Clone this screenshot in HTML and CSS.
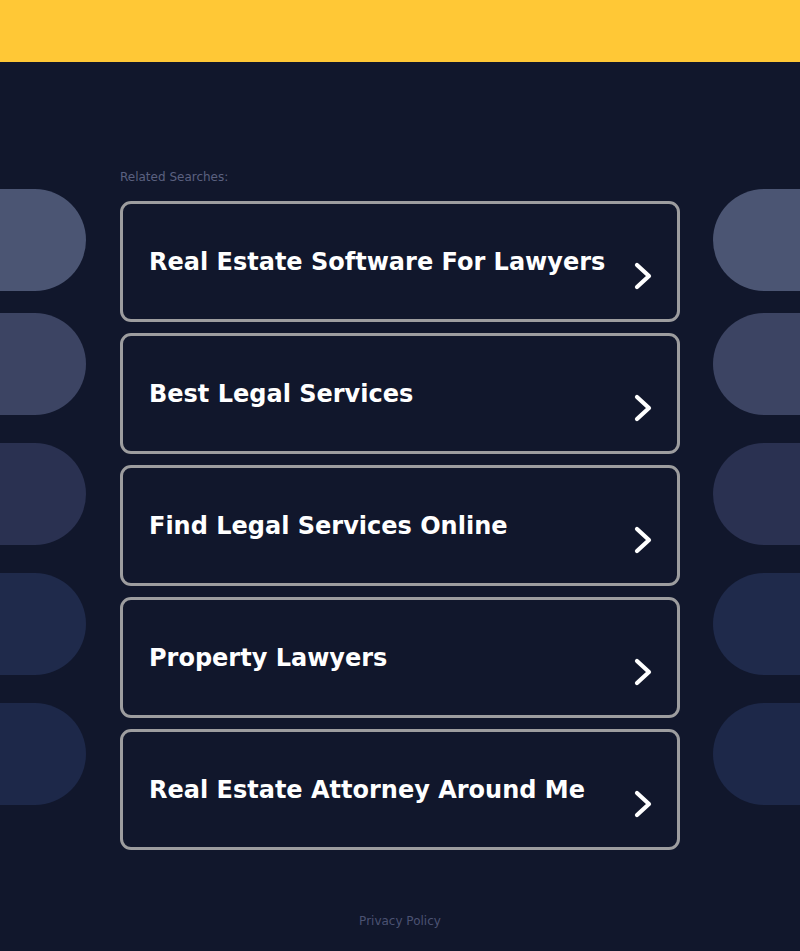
FILE: index.html
```html
<!DOCTYPE html>
<html lang="en">
<head>
<meta charset="utf-8">
<title>Related Searches</title>
<link rel="stylesheet" href="styles.css">
</head>
<body>
<header class="topbar"></header>
<div class="layout">
  <aside class="side side-left">
    <div class="pill p1"></div>
    <div class="pill p2"></div>
    <div class="pill p3"></div>
    <div class="pill p4"></div>
    <div class="pill p5"></div>
  </aside>
  <main class="main">
    <p class="label">Related Searches:</p>
    <ul class="links">
      <li><a class="card" href="#"><span class="card-text">Real Estate Software For Lawyers</span><svg class="chev" viewBox="0 0 20 28" width="20" height="28"><polyline points="4,3 16,14 4,25" fill="none" stroke="#fff" stroke-width="4.2" stroke-linecap="round" stroke-linejoin="round"/></svg></a></li>
      <li><a class="card" href="#"><span class="card-text">Best Legal Services</span><svg class="chev" viewBox="0 0 20 28" width="20" height="28"><polyline points="4,3 16,14 4,25" fill="none" stroke="#fff" stroke-width="4.2" stroke-linecap="round" stroke-linejoin="round"/></svg></a></li>
      <li><a class="card" href="#"><span class="card-text">Find Legal Services Online</span><svg class="chev" viewBox="0 0 20 28" width="20" height="28"><polyline points="4,3 16,14 4,25" fill="none" stroke="#fff" stroke-width="4.2" stroke-linecap="round" stroke-linejoin="round"/></svg></a></li>
      <li><a class="card" href="#"><span class="card-text">Property Lawyers</span><svg class="chev" viewBox="0 0 20 28" width="20" height="28"><polyline points="4,3 16,14 4,25" fill="none" stroke="#fff" stroke-width="4.2" stroke-linecap="round" stroke-linejoin="round"/></svg></a></li>
      <li><a class="card" href="#"><span class="card-text">Real Estate Attorney Around Me</span><svg class="chev" viewBox="0 0 20 28" width="20" height="28"><polyline points="4,3 16,14 4,25" fill="none" stroke="#fff" stroke-width="4.2" stroke-linecap="round" stroke-linejoin="round"/></svg></a></li>
    </ul>
  </main>
  <aside class="side side-right">
    <div class="pill p1"></div>
    <div class="pill p2"></div>
    <div class="pill p3"></div>
    <div class="pill p4"></div>
    <div class="pill p5"></div>
  </aside>
</div>
<footer class="footer"><a class="privacy" href="#">Privacy Policy</a></footer>
</body>
</html>
```
FILE: styles.css
```css
html, body {
  margin: 0;
  padding: 0;
}
body {
  background: #11172c;
  font-family: "DejaVu Sans", sans-serif;
  height: 951px;
  overflow: hidden;
}
.topbar {
  height: 62px;
  background: #ffc836;
}
.layout {
  display: grid;
  grid-template-columns: 120px 560px 120px;
}
.side {
  display: flex;
  flex-direction: column;
  padding-top: 127px;
}
.pill {
  height: 102px;
  margin-bottom: 28px;
}
.pill.p1 { margin-bottom: 22px; background: #4b5573; }
.pill.p2 { background: #3c4463; }
.pill.p3 { background: #2a3151; }
.pill.p4 { background: #1f2a4b; }
.pill.p5 { background: #1d2849; }
.side-left .pill {
  width: 86px;
  border-radius: 0 51px 51px 0;
}
.side-right .pill {
  margin-left: 33px;
  border-radius: 51px 0 0 51px;
}
.main {
  padding-top: 108px;
}
.label {
  margin: 0 0 17px;
  font-size: 12px;
  line-height: 14px;
  color: #5b6180;
}
.links {
  list-style: none;
  margin: 0;
  padding: 0;
  display: flex;
  flex-direction: column;
  gap: 11px;
}
.card {
  box-sizing: border-box;
  height: 121px;
  display: flex;
  align-items: center;
  justify-content: space-between;
  border: 3px solid #9d9d9f;
  border-radius: 11px;
  padding: 0 24px 0 26px;
  text-decoration: none;
  color: #fff;
}
.card-text {
  font-size: 24px;
  font-weight: bold;
  line-height: 28px;
}
.chev {
  display: block;
  margin-top: 28px;
}
.footer {
  text-align: center;
  padding-top: 60px;
}
.privacy {
  font-size: 12px;
  color: #4b5272;
  text-decoration: none;
}
```
